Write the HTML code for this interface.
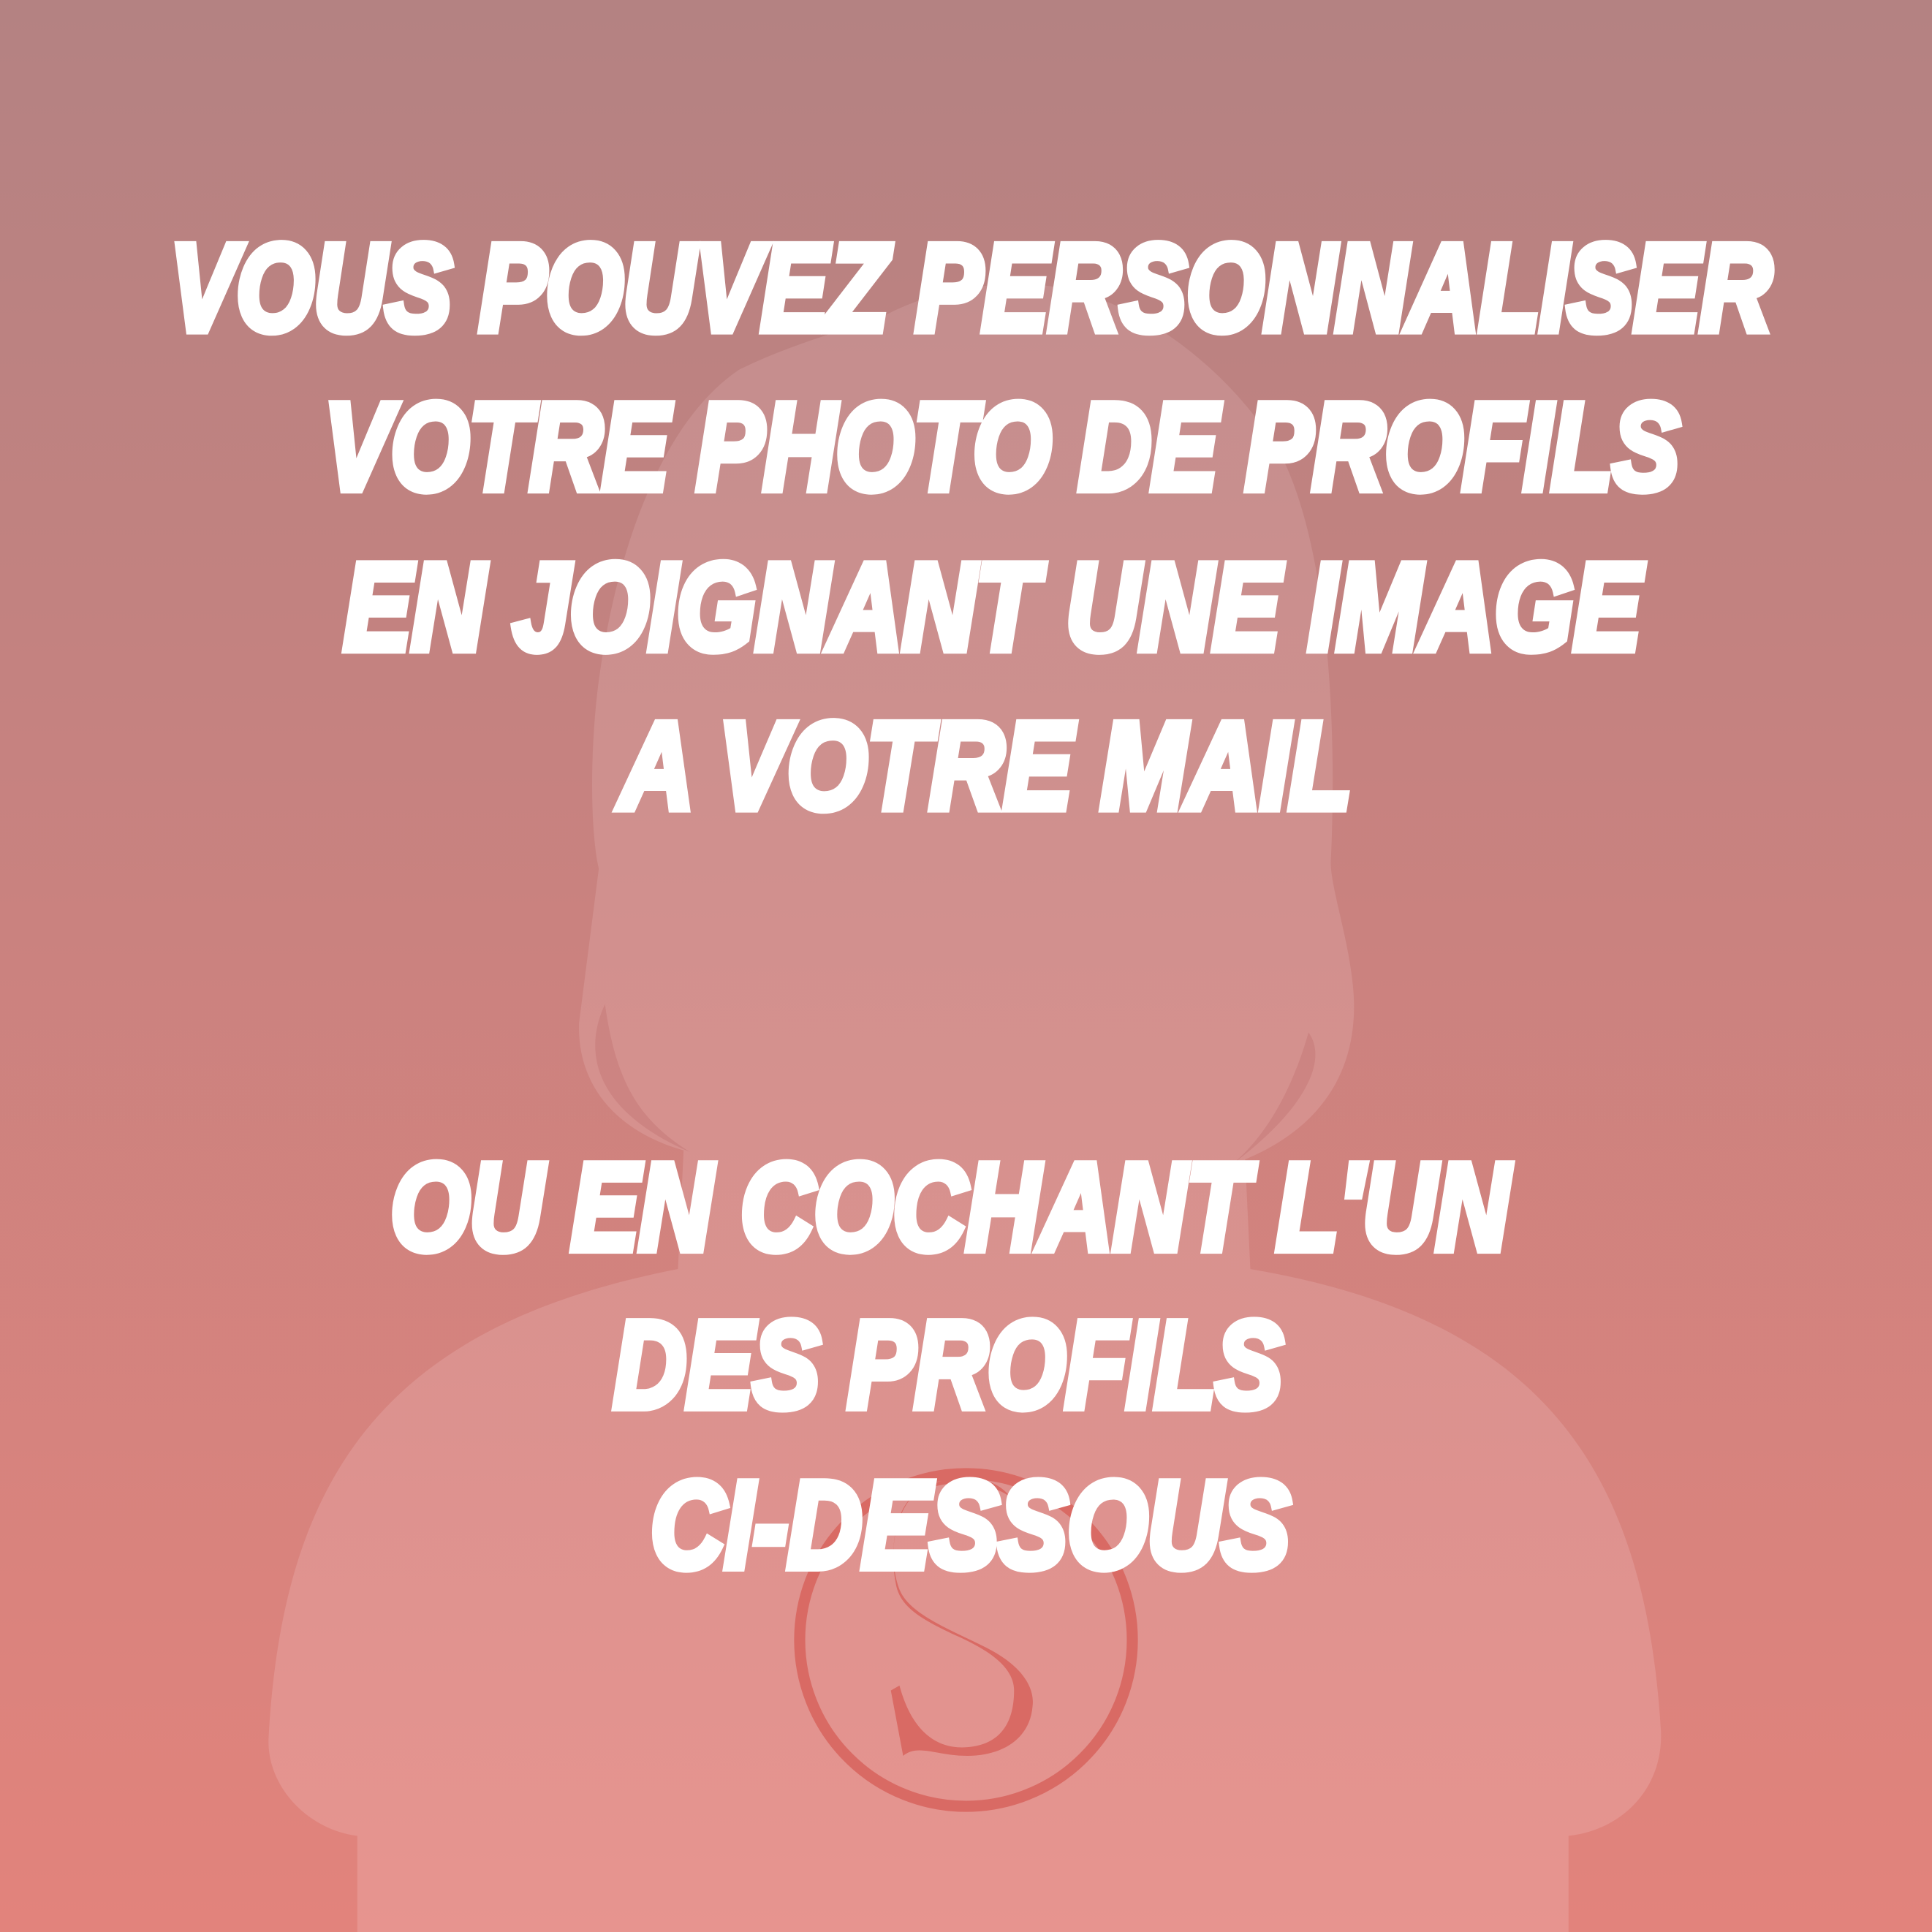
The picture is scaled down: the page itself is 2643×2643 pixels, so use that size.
<!DOCTYPE html>
<html><head><meta charset="utf-8"><style>
html,body{margin:0;padding:0;}
body{width:2643px;height:2643px;overflow:hidden;}
svg{display:block;}
text{font-family:"Liberation Sans",sans-serif;font-weight:bold;font-style:italic;fill:#fff;stroke:#fff;stroke-width:7;stroke-linejoin:miter;font-size:100px;}
</style></head><body>
<svg width="2643" height="2643" viewBox="0 0 1568 1568" xmlns="http://www.w3.org/2000/svg">
<defs>
<linearGradient id="bg" x1="0" y1="0" x2="0" y2="1">
<stop offset="0" stop-color="#b48282"/><stop offset="1" stop-color="#e2837c"/>
</linearGradient>
<linearGradient id="sil" gradientUnits="userSpaceOnUse" x1="0" y1="230" x2="0" y2="1568">
<stop offset="0" stop-color="#c48e8e"/><stop offset="1" stop-color="#e7948f"/>
</linearGradient>
</defs>
<rect width="1568" height="1568" fill="url(#bg)"/>
<g fill="url(#sil)">
<path d="M555 930 L1010 930 L1015 1035 L550 1035 Z"/>
<path d="M720 255 C680 270 640 280 600 300 C540 340 500 440 485 560 C478 620 480 680 486 705 L470 830 C468 880 500 920 560 935 L1000 945 C1070 920 1105 870 1098 800 C1094 760 1080 720 1080 700 C1085 600 1080 450 1040 370 C1000 300 920 240 850 232 C800 228 760 235 720 255 Z"/>
<path d="M550 1030 C320 1075 230 1190 218 1410 C216 1450 250 1485 290 1490 L290 1568 L1273 1568 L1273 1490 C1318 1485 1350 1450 1348 1405 C1335 1190 1250 1070 1015 1030 Z"/>
</g>
<path d="M491 815 C470 860 490 905 560 935 C520 910 500 880 491 815 Z" fill="#c97f7c" opacity="0.7"/>
<path d="M1062 838 C1078 860 1060 900 1000 945 C1030 920 1050 880 1062 838 Z" fill="#c97f7c" opacity="0.7"/>
<circle cx="784" cy="1331" r="135" fill="none" stroke="#d96a64" stroke-width="9"/>
<path d="M820 1215 C805 1195 770 1195 745 1210 C722 1230 722 1270 730 1290 C738 1310 770 1322 800 1337 C830 1352 840 1370 838 1385 C836 1410 815 1425 785 1425 C760 1425 745 1415 733 1425 L723 1372 L730 1368 C740 1405 760 1420 785 1418 C812 1416 823 1398 823 1372 C823 1352 800 1338 775 1327 C745 1313 730 1303 727 1285 C723 1265 724 1230 740 1215 C760 1200 800 1200 820 1215 Z" fill="#d96a64"/>
<text x="138" y="268" textLength="1300" lengthAdjust="spacingAndGlyphs">VOUS POUVEZ PERSONNALISER</text>
<text x="263" y="397" textLength="1100" lengthAdjust="spacingAndGlyphs">VOTRE PHOTO DE PROFILS</text>
<text x="279" y="527" textLength="1053" lengthAdjust="spacingAndGlyphs">EN JOIGNANT UNE IMAGE</text>
<text x="503" y="656" textLength="594" lengthAdjust="spacingAndGlyphs">A VOTRE MAIL</text>
<text x="317" y="1014" textLength="908" lengthAdjust="spacingAndGlyphs">OU EN COCHANT L'UN</text>
<text x="498" y="1142" textLength="543" lengthAdjust="spacingAndGlyphs">DES PROFILS</text>
<text x="528" y="1272" textLength="519" lengthAdjust="spacingAndGlyphs">CI-DESSOUS</text>
</svg>
</body></html>
